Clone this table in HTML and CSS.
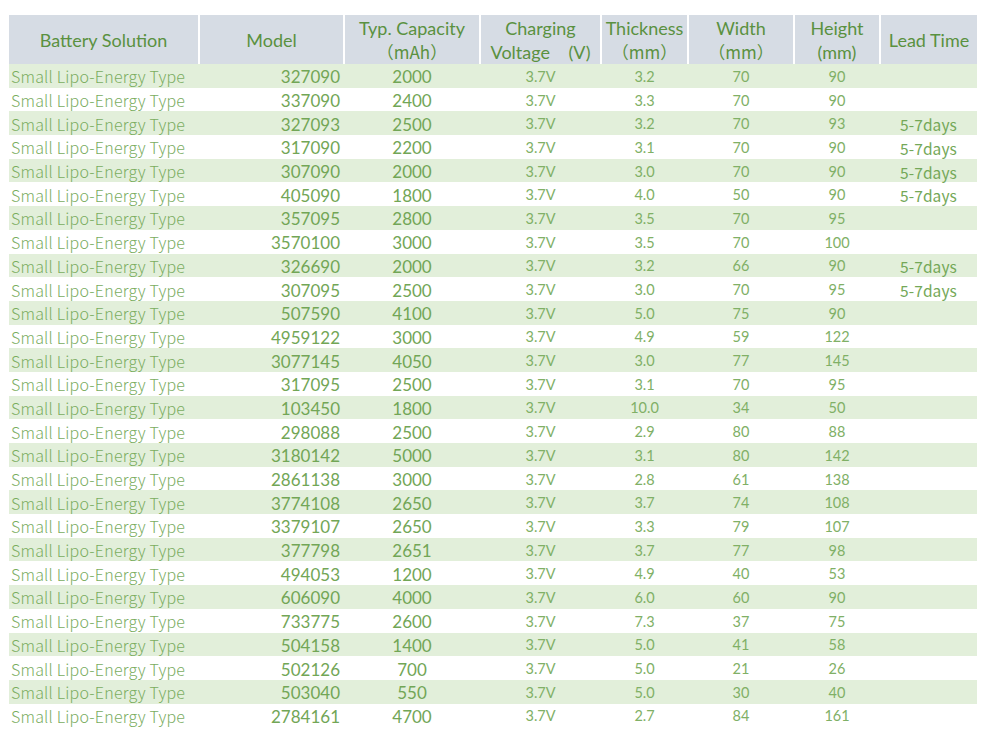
FILE: index.html
```html
<!DOCTYPE html>
<html>
<head>
<meta charset="utf-8">
<title>Battery Table</title>
<link rel="stylesheet" href="styles.css">
</head>
<body>
<table class="spec">
<colgroup>
<col class="c1"><col class="c2"><col class="c3"><col class="c4"><col class="c5"><col class="c6"><col class="c7"><col class="c8">
</colgroup>
<thead>
<tr>
<th class="first">Battery Solution</th>
<th>Model</th>
<th>Typ. Capacity<br><span class="fw">（mAh）</span></th>
<th>Charging<br>Voltage&nbsp;&nbsp;&nbsp;&nbsp;(V)</th>
<th>Thickness<br><span class="fw">（mm）</span></th>
<th>Width<br><span class="fw">（mm）</span></th>
<th>Height<br>(mm)</th>
<th>Lead Time</th>
</tr>
</thead>
<tbody>
<tr><td class="sol">Small Lipo-Energy Type</td><td class="model">327090</td><td class="cap">2000</td><td class="num">3.7V</td><td class="num">3.2</td><td class="num">70</td><td class="num">90</td><td class="lead"></td></tr>
<tr><td class="sol">Small Lipo-Energy Type</td><td class="model">337090</td><td class="cap">2400</td><td class="num">3.7V</td><td class="num">3.3</td><td class="num">70</td><td class="num">90</td><td class="lead"></td></tr>
<tr><td class="sol">Small Lipo-Energy Type</td><td class="model">327093</td><td class="cap">2500</td><td class="num">3.7V</td><td class="num">3.2</td><td class="num">70</td><td class="num">93</td><td class="lead">5-7days</td></tr>
<tr><td class="sol">Small Lipo-Energy Type</td><td class="model">317090</td><td class="cap">2200</td><td class="num">3.7V</td><td class="num">3.1</td><td class="num">70</td><td class="num">90</td><td class="lead">5-7days</td></tr>
<tr><td class="sol">Small Lipo-Energy Type</td><td class="model">307090</td><td class="cap">2000</td><td class="num">3.7V</td><td class="num">3.0</td><td class="num">70</td><td class="num">90</td><td class="lead">5-7days</td></tr>
<tr><td class="sol">Small Lipo-Energy Type</td><td class="model">405090</td><td class="cap">1800</td><td class="num">3.7V</td><td class="num">4.0</td><td class="num">50</td><td class="num">90</td><td class="lead">5-7days</td></tr>
<tr><td class="sol">Small Lipo-Energy Type</td><td class="model">357095</td><td class="cap">2800</td><td class="num">3.7V</td><td class="num">3.5</td><td class="num">70</td><td class="num">95</td><td class="lead"></td></tr>
<tr><td class="sol">Small Lipo-Energy Type</td><td class="model">3570100</td><td class="cap">3000</td><td class="num">3.7V</td><td class="num">3.5</td><td class="num">70</td><td class="num">100</td><td class="lead"></td></tr>
<tr><td class="sol">Small Lipo-Energy Type</td><td class="model">326690</td><td class="cap">2000</td><td class="num">3.7V</td><td class="num">3.2</td><td class="num">66</td><td class="num">90</td><td class="lead">5-7days</td></tr>
<tr><td class="sol">Small Lipo-Energy Type</td><td class="model">307095</td><td class="cap">2500</td><td class="num">3.7V</td><td class="num">3.0</td><td class="num">70</td><td class="num">95</td><td class="lead">5-7days</td></tr>
<tr><td class="sol">Small Lipo-Energy Type</td><td class="model">507590</td><td class="cap">4100</td><td class="num">3.7V</td><td class="num">5.0</td><td class="num">75</td><td class="num">90</td><td class="lead"></td></tr>
<tr><td class="sol">Small Lipo-Energy Type</td><td class="model">4959122</td><td class="cap">3000</td><td class="num">3.7V</td><td class="num">4.9</td><td class="num">59</td><td class="num">122</td><td class="lead"></td></tr>
<tr><td class="sol">Small Lipo-Energy Type</td><td class="model">3077145</td><td class="cap">4050</td><td class="num">3.7V</td><td class="num">3.0</td><td class="num">77</td><td class="num">145</td><td class="lead"></td></tr>
<tr><td class="sol">Small Lipo-Energy Type</td><td class="model">317095</td><td class="cap">2500</td><td class="num">3.7V</td><td class="num">3.1</td><td class="num">70</td><td class="num">95</td><td class="lead"></td></tr>
<tr><td class="sol">Small Lipo-Energy Type</td><td class="model">103450</td><td class="cap">1800</td><td class="num">3.7V</td><td class="num">10.0</td><td class="num">34</td><td class="num">50</td><td class="lead"></td></tr>
<tr><td class="sol">Small Lipo-Energy Type</td><td class="model">298088</td><td class="cap">2500</td><td class="num">3.7V</td><td class="num">2.9</td><td class="num">80</td><td class="num">88</td><td class="lead"></td></tr>
<tr><td class="sol">Small Lipo-Energy Type</td><td class="model">3180142</td><td class="cap">5000</td><td class="num">3.7V</td><td class="num">3.1</td><td class="num">80</td><td class="num">142</td><td class="lead"></td></tr>
<tr><td class="sol">Small Lipo-Energy Type</td><td class="model">2861138</td><td class="cap">3000</td><td class="num">3.7V</td><td class="num">2.8</td><td class="num">61</td><td class="num">138</td><td class="lead"></td></tr>
<tr><td class="sol">Small Lipo-Energy Type</td><td class="model">3774108</td><td class="cap">2650</td><td class="num">3.7V</td><td class="num">3.7</td><td class="num">74</td><td class="num">108</td><td class="lead"></td></tr>
<tr><td class="sol">Small Lipo-Energy Type</td><td class="model">3379107</td><td class="cap">2650</td><td class="num">3.7V</td><td class="num">3.3</td><td class="num">79</td><td class="num">107</td><td class="lead"></td></tr>
<tr><td class="sol">Small Lipo-Energy Type</td><td class="model">377798</td><td class="cap">2651</td><td class="num">3.7V</td><td class="num">3.7</td><td class="num">77</td><td class="num">98</td><td class="lead"></td></tr>
<tr><td class="sol">Small Lipo-Energy Type</td><td class="model">494053</td><td class="cap">1200</td><td class="num">3.7V</td><td class="num">4.9</td><td class="num">40</td><td class="num">53</td><td class="lead"></td></tr>
<tr><td class="sol">Small Lipo-Energy Type</td><td class="model">606090</td><td class="cap">4000</td><td class="num">3.7V</td><td class="num">6.0</td><td class="num">60</td><td class="num">90</td><td class="lead"></td></tr>
<tr><td class="sol">Small Lipo-Energy Type</td><td class="model">733775</td><td class="cap">2600</td><td class="num">3.7V</td><td class="num">7.3</td><td class="num">37</td><td class="num">75</td><td class="lead"></td></tr>
<tr><td class="sol">Small Lipo-Energy Type</td><td class="model">504158</td><td class="cap">1400</td><td class="num">3.7V</td><td class="num">5.0</td><td class="num">41</td><td class="num">58</td><td class="lead"></td></tr>
<tr><td class="sol">Small Lipo-Energy Type</td><td class="model">502126</td><td class="cap">700</td><td class="num">3.7V</td><td class="num">5.0</td><td class="num">21</td><td class="num">26</td><td class="lead"></td></tr>
<tr><td class="sol">Small Lipo-Energy Type</td><td class="model">503040</td><td class="cap">550</td><td class="num">3.7V</td><td class="num">5.0</td><td class="num">30</td><td class="num">40</td><td class="lead"></td></tr>
<tr><td class="sol">Small Lipo-Energy Type</td><td class="model">2784161</td><td class="cap">4700</td><td class="num">3.7V</td><td class="num">2.7</td><td class="num">84</td><td class="num">161</td><td class="lead"></td></tr>
</tbody>
</table>
</body>
</html>
```
FILE: styles.css
```css
html, body {
  margin: 0;
  background: #ffffff;
}
body {
  padding: 15px 8px 0 9px;
}
.spec {
  width: 968px;
  table-layout: fixed;
  border-collapse: collapse;
  border-spacing: 0;
}
.c1 { width: 190px; }
.c2 { width: 145px; }
.c3 { width: 136px; }
.c4 { width: 121px; }
.c5 { width: 87px; }
.c6 { width: 106px; }
.c7 { width: 86px; }
.c8 { width: 97px; }

.spec thead tr {
  height: 49px;
}
.spec th {
  padding: 0;
  background: #d6dce4;
  border-left: 2px solid #ffffff;
  color: #5a9140;
  font-family: Lato, "Liberation Sans", sans-serif;
  font-weight: 400;
  font-size: 18px;
  line-height: 24px;
  text-align: center;
  vertical-align: middle;
}
.spec th.first {
  border-left: 0;
}
.spec .fw {
  font-family: "Noto Sans CJK SC", Lato, sans-serif;
  font-size: 17px;
}
.spec tbody tr {
  height: 23.7px;
}
.spec td {
  padding: 1px 0 0 0;
  color: #78ab5d;
  white-space: nowrap;
  vertical-align: middle;
  text-align: center;
  line-height: 20px;
}
.spec tbody tr:nth-child(odd) td {
  background: #e2efda;
}
.spec td.sol {
  text-align: left;
  padding-left: 2px;
  font-family: "Noto Sans CJK SC", "Noto Sans", sans-serif;
  font-weight: 300;
  font-size: 16px;
  letter-spacing: 0.2px;
  color: #7aad5f;
}
.spec td.model {
  text-align: right;
  padding-right: 4px;
  padding-top: 3px;
  font-family: Lato, "Liberation Sans", sans-serif;
  font-size: 17px;
  color: #72a656;
}
.spec td.cap {
  padding-top: 3px;
  font-family: Lato, "Liberation Sans", sans-serif;
  font-size: 17px;
  color: #72a656;
}
.spec td.num {
  padding-top: 2px;
  font-family: Lato, "Liberation Sans", sans-serif;
  font-weight: 400;
  font-size: 14.5px;
  color: #80b066;
}
.spec td.lead {
  padding-top: 2px;
  font-family: "Noto Sans CJK SC", "Noto Sans", sans-serif;
  font-weight: 400;
  font-size: 15.5px;
  letter-spacing: 0.1px;
  color: #74a858;
}
```
